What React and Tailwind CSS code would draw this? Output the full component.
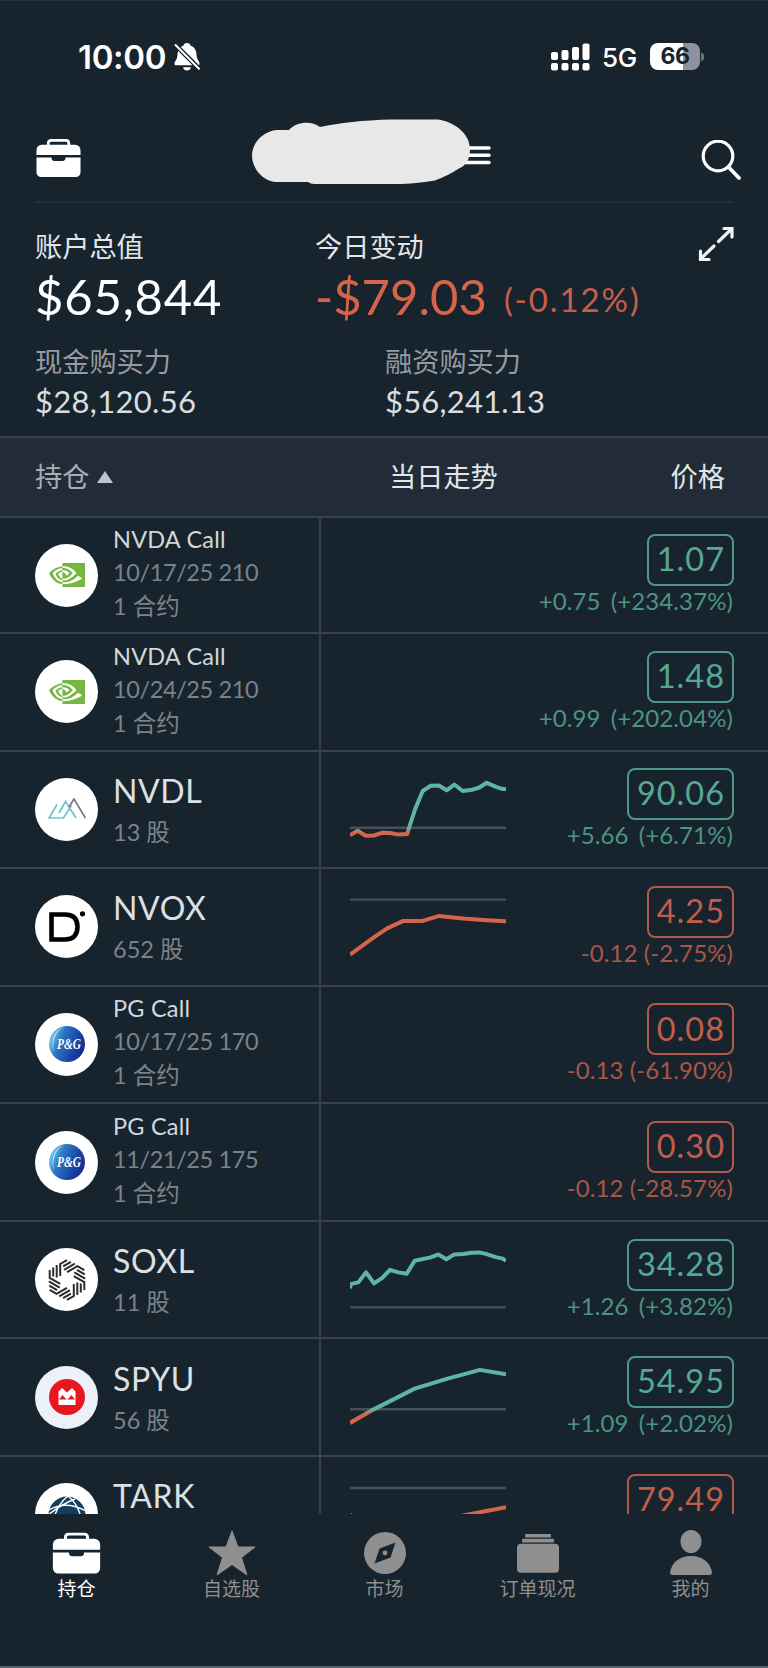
import React from 'react';
import { SiNvidia } from 'react-icons/si';

const UP = '#5fb5a3';
const DOWN = '#d5644b';

const HOLDINGS = [
  { logo: 'nvidia', name: 'NVDA Call', contract: '10/17/25 210', qty: '1 合约', price: '1.07', change: '+0.75 (+234.37%)', up: true },
  { logo: 'nvidia', name: 'NVDA Call', contract: '10/24/25 210', qty: '1 合约', price: '1.48', change: '+0.99 (+202.04%)', up: true },
  {
    logo: 'graniteshares',
    name: 'NVDL',
    qty: '13 股',
    price: '90.06',
    change: '+5.66 (+6.71%)',
    up: true,
    base: 75.8,
    points: '0,83.2 7.7,78.8 15.7,83.8 24,83.5 31.7,80.8 40,81 48.7,82.6 57.3,82 59,76 65,57.5 72.7,39 80.7,33.8 89,33.5 96.7,38.3 104.3,32.5 112.7,39 121.7,37.8 129.3,35.5 136.7,30.8 146,34.8 152,36.8 156,37.2',
  },
  {
    logo: 'defiance',
    name: 'NVOX',
    qty: '652 股',
    price: '4.25',
    change: '-0.12 (-2.75%)',
    up: false,
    base: 30.6,
    points: '0,85.6 21.7,69.8 36.7,59.6 53.3,51.9 72.7,51.9 89,46.9 113.3,49.6 136.7,51.2 156,52.2',
  },
  { logo: 'pg', name: 'PG Call', contract: '10/17/25 170', qty: '1 合约', price: '0.08', change: '-0.13 (-61.90%)', up: false },
  { logo: 'pg', name: 'PG Call', contract: '11/21/25 175', qty: '1 合约', price: '0.30', change: '-0.12 (-28.57%)', up: false },
  {
    logo: 'direxion',
    name: 'SOXL',
    qty: '11 股',
    price: '34.28',
    change: '+1.26 (+3.82%)',
    up: true,
    base: 85.4,
    points: '0,66.4 0.7,62.1 8.3,60.4 16,50.4 24,61.4 32.3,55.8 40,47.8 48.3,50.4 56.7,51.8 64.7,38.8 80.7,35.4 88.3,32.4 96.3,37.2 104.3,32.4 113.3,32.1 121.7,30.8 129.3,30.4 136.7,32.1 145.7,35.1 152.7,36.6 156,38.8',
  },
  {
    logo: 'bmo',
    name: 'SPYU',
    qty: '56 股',
    price: '54.95',
    change: '+1.09 (+2.02%)',
    up: true,
    base: 70.3,
    points: '0,83.9 23.3,70.6 64.7,49.6 96.7,39.9 130,30.9 156,35.3',
  },
  {
    logo: 'axs',
    name: 'TARK',
    price: '79.49',
    up: false,
    base: 31,
    points: '0,57 3,63 90,63 118.3,57.5 130,55.3 156,50.3',
  },
];

const BriefcaseIcon = ({ className }) => (
  <svg viewBox="0 0 46 40" className={className}>
    <path d="M12.5 8V5q0-3 3-3h15q3 0 3 3v3" fill="none" stroke="currentColor" strokeWidth="2.8" />
    <path d="M6 6.5h34a5.5 5.5 0 0 1 5.5 5.5v5H.5v-5A5.5 5.5 0 0 1 6 6.5z" fill="currentColor" />
    <path d="M.5 19.5h15.3c0 2.3 1 3.5 3 3.5h8.4c2 0 3-1.2 3-3.5h15.3v15a5 5 0 0 1-5 5h-35a5 5 0 0 1-5-5z" fill="currentColor" />
  </svg>
);

const StatusBar = () => (
  <div className="flex h-[110px] items-center justify-between pl-[78px] pr-[64px] pt-px text-white font-['Inter','Noto_Sans_CJK_SC',sans-serif]">
    <div className="flex items-center gap-2">
      <span className="text-[33px] leading-[40px] font-semibold tracking-[-0.3px]">10:00</span>
      <svg viewBox="0 0 26 30" className="h-[30px] w-[26px]">
        <path d="M13 1c2 0 3.3 1.2 3.6 2.8 4 1.3 5.7 4.7 5.9 9 .2 5 3 6.5 3 9 0 1-.6 1.5-1.7 1.5H2.2C1.1 23.3.5 22.8.5 21.8c0-2.5 2.8-4 3-9 .2-4.3 1.9-7.7 5.9-9C9.7 2.2 11 1 13 1z" fill="white" />
        <path d="M9 25.2h8c-.4 2-1.9 3.3-4 3.3s-3.6-1.3-4-3.3z" fill="white" />
        <path d="M1 2.5 26 27.5" stroke="#18242d" strokeWidth="4.6" />
        <path d="M1.5 3 25 26.8" stroke="white" strokeWidth="2" strokeLinecap="round" />
      </svg>
    </div>
    <div className="flex items-center">
      <svg viewBox="0 0 40 28" className="mr-px h-[28px] w-[40px]" fill="white">
        <rect x="0" y="9" width="7" height="8" rx="2" />
        <rect x="10.5" y="7" width="7" height="10" rx="2" />
        <rect x="21" y="4" width="7" height="13" rx="2" />
        <rect x="31.5" y="0.5" width="7" height="16.5" rx="2" />
        <rect x="0" y="20" width="7" height="7.5" rx="2" />
        <rect x="10.5" y="20" width="7" height="7.5" rx="2" />
        <rect x="21" y="20" width="7" height="7.5" rx="2" />
        <rect x="31.5" y="20" width="7" height="7.5" rx="2" />
      </svg>
      <span className="ml-[10px] w-[36px] pt-[3px] text-[26px] leading-[30px] font-medium tracking-[-0.4px]">5G</span>
      <div className="ml-[12px] flex h-[27px] w-[50px] items-center justify-center rounded-[8px] bg-linear-to-r from-white from-67% to-[#8d929c] to-67% text-[23px] font-bold tracking-[-0.5px] text-[#18242d]">
        66
      </div>
      <div className="ml-px h-[8px] w-[3px] rounded-r-full bg-[#6b727b]" />
    </div>
  </div>
);

const TopBar = () => (
  <header className="mx-[35px] flex h-[92px] border-b-2 border-[#212d39]">
    <BriefcaseIcon className="mt-[27px] ml-px h-[40px] w-[45px] text-white" />
    <svg viewBox="0 0 240 66" className="mt-[8px] ml-[171px] h-[66px] w-[240px]">
      <path d="M200 29h37M200 36.3h37M190 43.5h47" stroke="white" strokeWidth="3.6" strokeLinecap="round" />
      <path d="M25 11h12c8-9 23-9 31-3C88 3.5 110 1.2 140 .4h46c15 2 32 13 32 30 0 10-4 16-11 19-8 5-14 8-24 12-14 2-24 3.5-40 3.600H62q-3 0-6-2H23C9 61 0 48 0 36.500 0 24 11 12 25 11z" fill="#e8e8e8" />
    </svg>
    <svg viewBox="0 0 40 40" className="mt-[29px] -mr-[8px] ml-auto h-[40px] w-[40px]" fill="none" stroke="white" strokeWidth="3.2">
      <circle cx="17" cy="16" r="14.8" />
      <path d="m27.5 27 10.5 11" strokeWidth="3.8" strokeLinecap="round" />
    </svg>
  </header>
);

const Summary = () => (
  <section className="pt-[25px] pr-[34px] pb-[15px] pl-[35px]">
    <div className="flex">
      <div className="w-[280px]">
        <div className="text-[27.2px] leading-[38px] text-[#e3e6e9]">账户总值</div>
        <div className="text-[49px] leading-[60px] tracking-[0.8px] text-white">$65,844</div>
      </div>
      <div>
        <div className="text-[27.2px] leading-[38px] text-[#e3e6e9]">今日变动</div>
        <div className="flex items-baseline text-[#d5644b]">
          <span className="text-[49px] leading-[60px]">-$79.03</span>
          <span className="relative -top-[3px] ml-[17px] text-[33px] leading-[40px] tracking-[1.9px] text-[#c65f4a]">(-0.12%)</span>
        </div>
      </div>
      <svg viewBox="0 0 36 36" className="mt-[-2px] ml-auto h-[36px] w-[36px]" fill="none" stroke="#f0f2f4" strokeWidth="3.2" strokeLinecap="round">
        <path d="m20.5 15.5 12.500-12M26 2.500h8V11M16 20 3.500 32M2.500 25v8.500h8.500" />
      </svg>
    </div>
    <div className="mt-[17px] flex">
      <div className="w-[350px]">
        <div className="text-[27.2px] leading-[38px] text-[#969ba3]">现金购买力</div>
        <div className="text-[31px] leading-[40px] tracking-[0.3px] text-[#d9dde0]">$28,120.56</div>
      </div>
      <div>
        <div className="text-[27.2px] leading-[38px] text-[#969ba3]">融资购买力</div>
        <div className="text-[31px] leading-[40px] tracking-[0.2px] text-[#d9dde0]">$56,241.13</div>
      </div>
    </div>
  </section>
);

const TableHeader = () => (
  <div className="flex h-[82px] items-center border-y-2 border-[#39434e] bg-[#212c38] pr-[43px] pl-[35px] text-[27.2px] text-[#e3e6e9]">
    <div className="flex w-[354px] items-center gap-[8px] text-[#a9adb3]">
      持仓
      <svg viewBox="0 0 16 12" className="h-[12px] w-[16px]" fill="#bfc2c6">
        <path d="M8 0 16 12H0z" />
      </svg>
    </div>
    <div>当日走势</div>
    <div className="ml-auto">价格</div>
  </div>
);

const LOGOS = {
  nvidia: <SiNvidia size={36} color="#76b743" />,
  graniteshares: (
    <svg viewBox="0 0 38 22" className="h-[22px] w-[38px]" fill="none" strokeWidth="1.7">
      <path d="M9 6.5 1 20h14.5l8-12.5" stroke="#6fc3cf" />
      <path d="M11 15 17.5 3.5 28 20" stroke="#6fc3cf" />
      <path d="M21 9 26 1 37.5 20" stroke="#77787c" />
    </svg>
  ),
  defiance: (
    <svg viewBox="0 0 38 32" className="h-[32px] w-[38px]">
      <path d="M3.5 3.5H17c9 0 12.5 5 12.5 12.3S26 28.5 17 28.500H3.500z" fill="none" stroke="black" strokeWidth="4.6" />
      <circle cx="34.5" cy="2.8" r="2.6" />
    </svg>
  ),
  pg: (
    <svg viewBox="0 0 36 36" className="h-[36px] w-[36px] overflow-visible">
      <defs>
        <linearGradient id="pg-fill" x1="0" y1="0.3" x2="1" y2="0.7">
          <stop offset="0" stopColor="#7fd3ee" />
          <stop offset="0.3" stopColor="#2f78c4" />
          <stop offset="0.7" stopColor="#1a45a5" />
          <stop offset="1" stopColor="#14268a" />
        </linearGradient>
      </defs>
      <circle cx="18" cy="18" r="18" fill="url(#pg-fill)" />
      <path d="M16 .2C5 4 2 14 4.5 26 3 13 7 4 16 .2z" fill="white" opacity="0.8" />
      <text x="8" y="22.5" textLength="24" lengthAdjust="spacingAndGlyphs" fill="white" className="font-['Liberation_Serif',serif] text-[14px] font-bold italic">
        P&amp;G
      </text>
    </svg>
  ),
  direxion: (
    <svg viewBox="-21 -21 42 42" className="h-[42px] w-[42px]" fill="none" stroke="#2b2b2d" strokeWidth="2">
      {[0, 60, 120, 180, 240, 300].map((angle) => (
        <g key={angle} transform={`rotate(${angle})`}>
          <path d="M-17.3-10V-2.1l10.5 6M-13.8-12.5V-3.500M-10.300-15V-2.500" />
        </g>
      ))}
    </svg>
  ),
  bmo: (
    <svg viewBox="0 0 36 36" className="h-[36px] w-[36px]">
      <circle cx="18" cy="18" r="18" fill="#e9161f" />
      <path d="M9.5 12.5 13 9l5 4.5L23 9l3.5 3.5V26h-17z" fill="white" />
      <path d="M10 20.5 13.5 16l4 4.5zM18.5 20.5l4-4.5 3.5 4.5z" fill="#e9161f" />
    </svg>
  ),
  axs: (
    <svg viewBox="0 0 38 38" className="h-[38px] w-[38px]">
      <circle cx="19" cy="19" r="18.5" fill="#123f5f" />
      <path d="M1 14Q18 4 38 15M20 0Q10 8 6 22M20 0Q30 8 33 22M0 19Q14 8 27 3" fill="none" stroke="white" strokeWidth="1.4" />
    </svg>
  ),
};

const Sparkline = ({ id, points, base }) => (
  <svg viewBox="0 0 156 117" className="h-[117px] w-[156px] shrink-0" fill="none">
    <defs>
      <linearGradient id={id} gradientUnits="userSpaceOnUse" x1="0" y1={base} x2="0" y2={base + 5}>
        <stop offset="0" stopColor={base < 40 ? DOWN : UP} />
        <stop offset="1" stopColor={DOWN} />
      </linearGradient>
    </defs>
    <path d={`M0 ${base}H156`} stroke="#474f59" strokeWidth="2.4" />
    <polyline points={points} stroke={`url(#${id})`} strokeWidth="4" strokeLinejoin="round" />
  </svg>
);

const HoldingRow = ({ item }) => (
  <div className="flex h-[117.57px] shrink-0 border-b-2 border-[#39414d] first:h-[116px]">
    <div className="flex w-[321px] shrink-0 items-center border-r-2 border-[#39414d] pl-[35px]">
      <div className={`flex size-[63px] shrink-0 items-center justify-center rounded-full ${item.logo === 'bmo' ? 'bg-[#ebf0f9]' : 'bg-white'}`}>
        {LOGOS[item.logo]}
      </div>
      {item.contract ? (
        <div className="ml-[15px] pb-[4px] text-[23.5px] text-[#7b828a]">
          <div className="leading-[33px] tracking-[0.2px] text-[#d3d7da]">{item.name}</div>
          <div className="leading-[33px] tracking-[-0.4px]">{item.contract}</div>
          <div className="leading-[34px]">{item.qty}</div>
        </div>
      ) : (
        <div className="ml-[15px]">
          <div className="text-[32px] leading-[42px] tracking-[0.6px] text-[#dde0e3]">{item.name}</div>
          <div className="mt-[3px] h-[34px] text-[23.5px] leading-[34px] text-[#7b828a]">{item.qty}</div>
        </div>
      )}
    </div>
    <div className="flex grow justify-between pr-[34px] pl-[29px]">
      {item.points ? <Sparkline id={`trend-${item.name}`} points={item.points} base={item.base} /> : <span />}
      <div className={`flex flex-col items-end justify-center ${item.up ? 'text-[#4c9384] [word-spacing:4px]' : 'text-[#aa5647]'}`}>
        <div
          className={`flex h-[52px] items-center rounded-[8px] border-2 pr-[7px] pb-px pl-[8px] text-[32.5px] tracking-[1px] ${
            item.up ? 'border-[#4f9788] text-[#57a797]' : 'border-[#b15a49] text-[#c05e4b]'
          }`}
        >
          {item.price}
        </div>
        <div className="mr-px h-[30px] text-[24px] leading-[30px] tracking-[0.1px] whitespace-nowrap">{item.change}</div>
      </div>
    </div>
  </div>
);

const NAV_ITEMS = [
  { label: '持仓', active: true, icon: <BriefcaseIcon className="h-[42px] w-[49px]" /> },
  {
    label: '自选股',
    icon: (
      <svg viewBox="0 0 48 46" className="h-[46px] w-[48px]" fill="currentColor" stroke="currentColor" strokeWidth="1" strokeLinejoin="round">
        <path d="m24 1 6 16h17L33.5 27.5 39 45 24 34.5 9 45l5.5-17.5L1 17h17z" />
      </svg>
    ),
  },
  {
    label: '市场',
    icon: (
      <svg viewBox="0 0 42 42" className="h-[42px] w-[42px]" fill="currentColor">
        <circle cx="21" cy="21" r="21" />
        <path d="m31.5 10.500-5 15-16 6 5-15z" fill="#18242d" />
        <circle cx="21" cy="21" r="2.4" />
      </svg>
    ),
  },
  {
    label: '订单现况',
    icon: (
      <svg viewBox="0 0 42 40" className="h-[40px] w-[42px]" fill="currentColor">
        <rect x="8" y="1" width="26" height="3.5" rx="1" />
        <rect x="5" y="5.8" width="32" height="3.7" rx="1" />
        <rect x="0" y="10.7" width="42" height="29" rx="4" />
      </svg>
    ),
  },
  {
    label: '我的',
    icon: (
      <svg viewBox="0 0 42 46" className="h-[46px] w-[42px]" fill="currentColor">
        <ellipse cx="21" cy="11.5" rx="10.5" ry="11.5" />
        <path d="M0 42.5C1.5 33 9 26 21 26s19.5 7 21 16.5c0 1.5-1 2.5-2.5 2.500h-37C1 45 0 44 0 42.500z" />
      </svg>
    ),
  },
];

const BottomNav = () => (
  <nav className="flex grow items-start border-b-2 border-[#55616b] pt-[14px] pr-px">
    {NAV_ITEMS.map(({ label, active, icon }) => (
      <div key={label} className={`flex flex-1 flex-col items-center ${active ? 'pr-[2px] text-white' : 'text-[#8f8f8f]'}`}>
        <div className="flex h-[49px] items-center">{icon}</div>
        <span className="text-[19px] leading-[24px]">{label}</span>
      </div>
    ))}
  </nav>
);

export default function App() {
  return (
    <div className="flex h-[1668px] w-[768px] flex-col overflow-hidden border-t border-[#26323c] bg-[#18242d] font-['Lato','Noto_Sans_CJK_SC',sans-serif]">
      <StatusBar />
      <TopBar />
      <Summary />
      <TableHeader />
      <main className="flex h-[996px] shrink-0 flex-col overflow-hidden">
        {HOLDINGS.map((item) => (
          <HoldingRow key={`${item.name}-${item.contract || ''}`} item={item} />
        ))}
      </main>
      <BottomNav />
    </div>
  );
}
